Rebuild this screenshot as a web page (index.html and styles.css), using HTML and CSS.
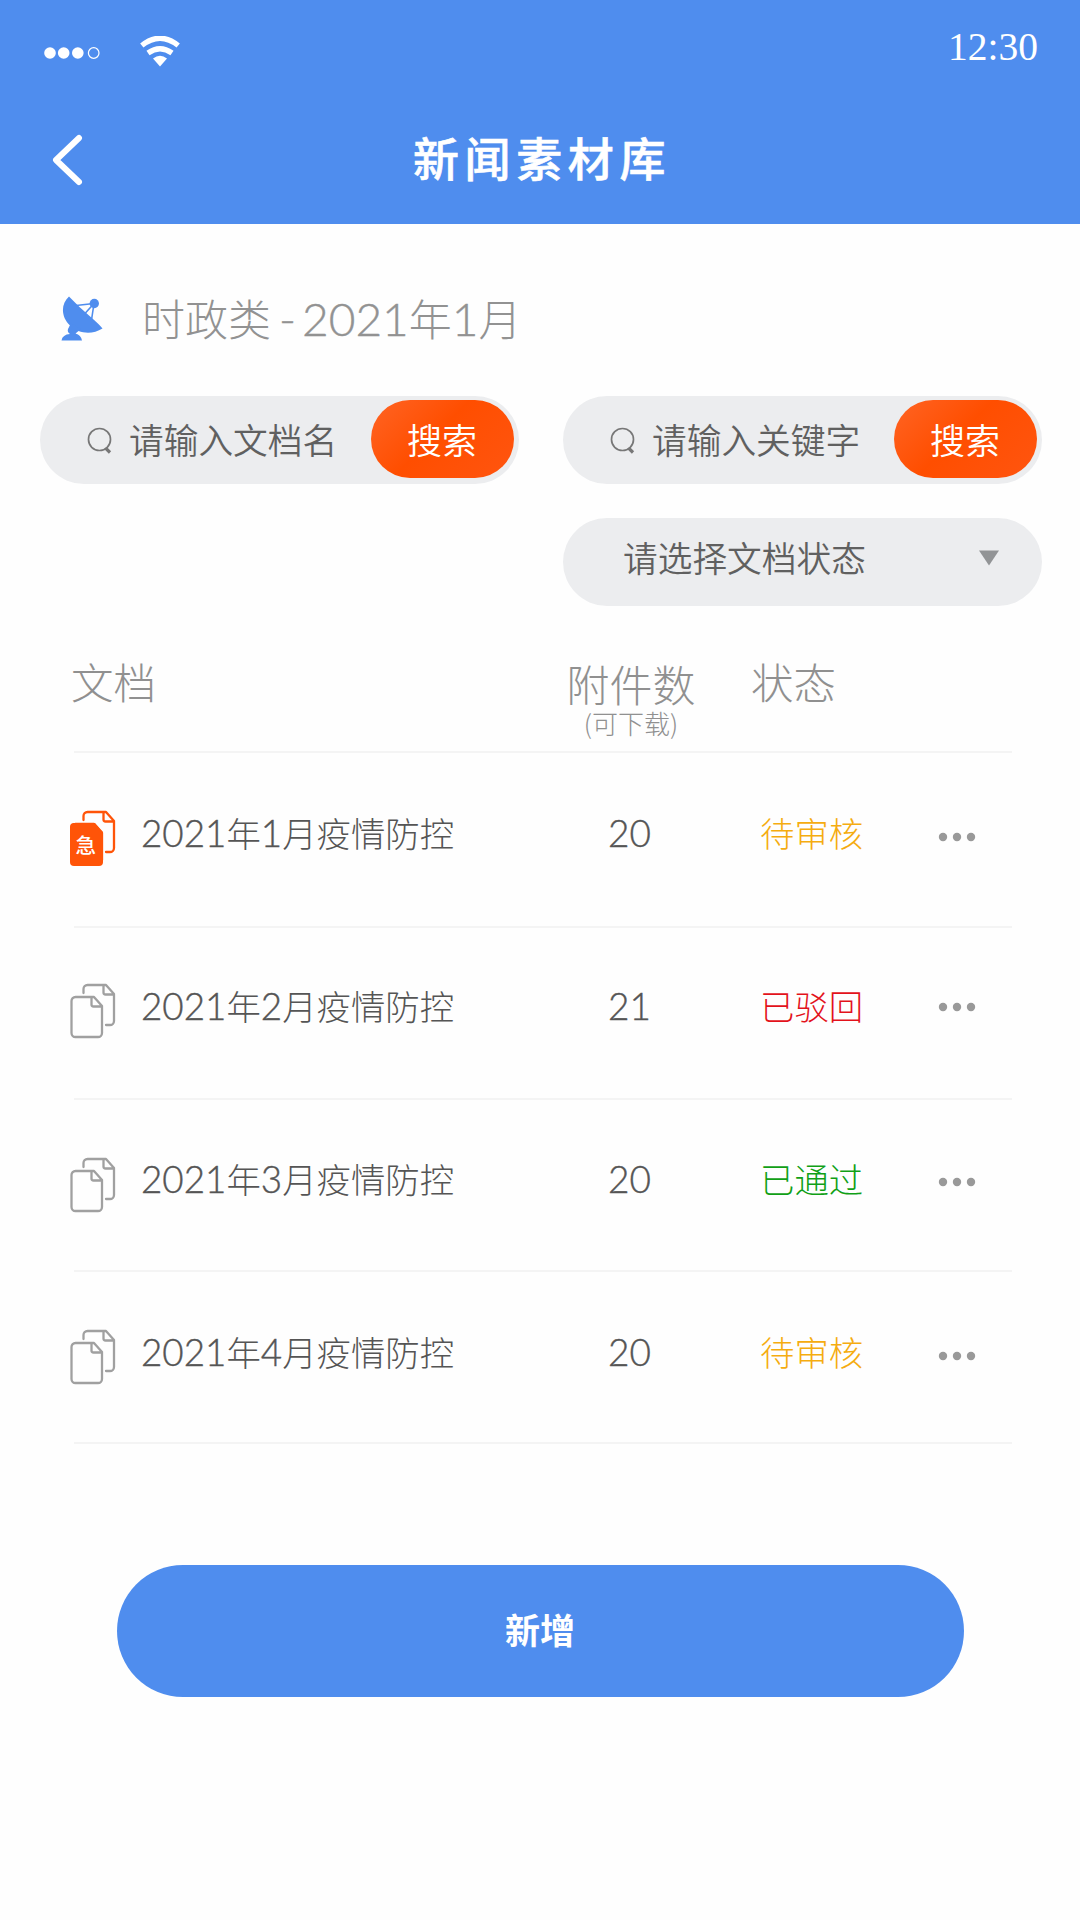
FILE: index.html
```html
<!DOCTYPE html>
<html lang="zh-CN">
<head>
<meta charset="utf-8">
<title>新闻素材库</title>
<link rel="stylesheet" href="styles.css">
</head>
<body>
<svg class="defs" width="0" height="0" aria-hidden="true">
  <symbol id="docs" viewBox="0 0 46 56">
    <path d="M13.500 10V6a4 4 0 0 1 4-4H36L44 11V38a4 4 0 0 1-4 4H36M33.500 2.500V9.500a2 2 0 0 0 2 2H44"/>
    <path d="M5.500 14H24L32 23V50a4 4 0 0 1-4 4H5.500a4 4 0 0 1-4-4V18a4 4 0 0 1 4-4ZM21.500 14.500V21.500a2 2 0 0 0 2 2H31.500"/>
  </symbol>
  <symbol id="search" viewBox="0 0 26 28">
    <circle cx="12.500" cy="12.500" r="11" fill="none" stroke-width="1.700"/>
    <path d="M18.500 21L23 25.500" stroke-width="3.200"/>
  </symbol>
</svg>
<header class="header">
  <div class="status-bar">
    <svg class="signal" viewBox="0 0 56 14"><circle cx="6" cy="7" r="5.800"/><circle cx="19.700" cy="7" r="5.800"/><circle cx="33.800" cy="7" r="5.800"/><circle class="ring" cx="49.700" cy="7" r="5.300"/></svg>
    <svg class="wifi" viewBox="0 0 40 31"><path class="arc" d="M1.800 9.500Q20-5 38.200 9.500M8 17Q20 8.500 32 17"/><path d="M13 22.500Q20 17 27 22.500L20 30.500Z"/></svg>
    <time class="clock">12:30</time>
  </div>
  <div class="nav">
    <svg class="back" viewBox="0 0 32 52"><path d="M28 4L5 26L28 48"/></svg>
    <h1 class="title">新闻素材库</h1>
  </div>
</header>
<main class="main">
  <div class="category">
    <svg class="dish" viewBox="0 0 42 45"><path d="M8 .5C-.5 8 0 21 9 29.500C18 38 31 39 41.500 32.500Q39 29 28 19.500Q18 11 8 .5Z"/><path d="M10 27L7 33Q6 36 9 38Q1.500 38.500 .500 44.500H21Q20 39 14.500 37.500L20 33Z"/><circle cx="33.300" cy="7.500" r="4.700"/><path class="strut" d="M15 9.500L33 7.500L23.500 18M33 7.500L30.500 24"/></svg>
    <h2 class="category-name">时政类<span class="num dash">-</span><span class="num">2021</span>年<span class="num">1</span>月</h2>
  </div>
  <div class="filters">
    <div class="field">
      <svg class="search-icon"><use href="#search"/></svg>
      <span class="placeholder">请输入文档名</span>
      <button class="search-btn">搜索</button>
    </div>
    <div class="field">
      <svg class="search-icon"><use href="#search"/></svg>
      <span class="placeholder">请输入关键字</span>
      <button class="search-btn">搜索</button>
    </div>
    <div class="field select">
      <span class="placeholder">请选择文档状态</span>
      <svg class="caret" viewBox="0 0 22 16"><path d="M1 .500H21L11 15.500Z"/></svg>
    </div>
  </div>
  <section class="table">
    <div class="row head">
      <div class="doc-head">文档</div>
      <div class="count-head">附件数<small class="hint">(可下载)</small></div>
      <div class="state-head">状态</div>
    </div>
    <div class="row first">
      <div class="icon urgent"><svg class="docs"><use href="#docs"/></svg><svg class="urgent-page" viewBox="0 0 34 44"><path d="M4 0H25L33 9V39a4 4 0 0 1-4 4H4a4 4 0 0 1-4-4V4a4 4 0 0 1 4-4Z"/></svg><span class="urgent-mark">急</span></div>
      <div class="name"><span class="num">2021</span>年<span class="num">1</span>月疫情防控</div>
      <div class="count num">20</div>
      <div class="state pending">待审核</div>
      <svg class="more" viewBox="0 0 38 10"><circle cx="5" cy="5" r="4.200"/><circle cx="19" cy="5" r="4.200"/><circle cx="33" cy="5" r="4.200"/></svg>
    </div>
    <div class="row second">
      <div class="icon"><svg class="docs"><use href="#docs"/></svg></div>
      <div class="name"><span class="num">2021</span>年<span class="num">2</span>月疫情防控</div>
      <div class="count num">21</div>
      <div class="state rejected">已驳回</div>
      <svg class="more" viewBox="0 0 38 10"><circle cx="5" cy="5" r="4.200"/><circle cx="19" cy="5" r="4.200"/><circle cx="33" cy="5" r="4.200"/></svg>
    </div>
    <div class="row third">
      <div class="icon"><svg class="docs"><use href="#docs"/></svg></div>
      <div class="name"><span class="num">2021</span>年<span class="num">3</span>月疫情防控</div>
      <div class="count num">20</div>
      <div class="state passed">已通过</div>
      <svg class="more" viewBox="0 0 38 10"><circle cx="5" cy="5" r="4.200"/><circle cx="19" cy="5" r="4.200"/><circle cx="33" cy="5" r="4.200"/></svg>
    </div>
    <div class="row">
      <div class="icon"><svg class="docs"><use href="#docs"/></svg></div>
      <div class="name"><span class="num">2021</span>年<span class="num">4</span>月疫情防控</div>
      <div class="count num">20</div>
      <div class="state pending">待审核</div>
      <svg class="more" viewBox="0 0 38 10"><circle cx="5" cy="5" r="4.200"/><circle cx="19" cy="5" r="4.200"/><circle cx="33" cy="5" r="4.200"/></svg>
    </div>
  </section>
  <button class="add-btn">新增</button>
</main>
</body>
</html>
```
FILE: styles.css
```css
* { box-sizing: border-box; }

body {
  margin: 0;
  width: 1080px;
  min-height: 1920px;
  background: #fefefe;
  color: #606060;
  font-family: "Noto Sans CJK SC", sans-serif;
  font-weight: 350;
}

svg { display: block; flex: none; }
button { border: 0; padding: 0; font: inherit; color: #fff; }
.defs { position: absolute; }
.num { font-family: Lato, sans-serif; font-size: 1.07em; font-weight: 300; -webkit-text-stroke: .4px currentColor; }

.header { height: 224px; background: #4f8dee; color: #fff; }
.status-bar { height: 100px; display: flex; padding: 0 42px 0 44px; }
.signal { width: 56px; height: 14px; margin-top: 46px; fill: #fff; }
.signal .ring { fill: none; stroke: #fff; stroke-width: 1.200; }
.wifi { width: 40px; height: 31px; margin: 36px 0 0 40px; fill: #fff; }
.wifi .arc { fill: none; stroke: #fff; stroke-width: 5.300; }
.clock { margin: 24px 0 0 auto; font: 39.500px/46px "Liberation Serif", serif; }
.nav { height: 120px; display: grid; grid-template-columns: 130px 1fr 130px; align-items: center; }
.back { width: 32px; height: 52px; margin-left: 51px; fill: none; stroke: #fff; stroke-width: 6; stroke-linecap: round; stroke-linejoin: round; }
.title { margin: 0; padding-bottom: 8px; text-align: center; font-size: 46px; line-height: 60px; font-weight: 500; letter-spacing: 5.600px; text-indent: 4px; -webkit-text-stroke: .6px #fff; }

.category { display: flex; height: 172px; padding: 72px 0 0 61px; }
.dish { width: 42px; height: 45px; fill: #4f8dee; }
.strut { fill: none; stroke: #4f8dee; stroke-width: 1.600; }
.category-name { margin: -9px 0 0 39px; font-size: 43px; line-height: 60px; font-weight: 300; color: #929292; white-space: nowrap; }
.dash { margin: 0 6px 0 8px; }

.filters { display: grid; grid-template-columns: 479px 479px; gap: 34px 44px; padding-left: 40px; }
.field { height: 88px; border-radius: 44px; background: #ecedef; display: flex; align-items: center; padding: 0 5px 0 47px; }
.search-icon { width: 26px; height: 28px; stroke: #777; margin: 2px 16px 0 0; }
.placeholder { margin-top: -2px; font-size: 34.700px; line-height: 50px; white-space: nowrap; }
.search-btn { width: 143px; height: 78px; margin: 0 0 2px auto; padding: 0 1px 2px 0; border-radius: 39px; background: linear-gradient(135deg, #ff6424, #ff4e00 45%, #ff5510); font-size: 35px; }
.select { grid-column: 2; padding: 0 42px 8px 60px; justify-content: space-between; }
.caret { width: 22px; height: 16px; fill: #929496; }

.table { margin: 35px 68px 0 70px; font-weight: 300; color: #555; }
.row { height: 172px; display: grid; grid-template-columns: 71px 467px 143px 186px 1fr; align-items: start; font-size: 34.400px; line-height: 50px; position: relative; }
.row::after { content: ""; position: absolute; left: 4px; right: 0; bottom: 0; height: 2px; background: #f4f4f4; }
.head { height: 112px; grid-template-columns: 493px 187px 1fr; font-size: 42.500px; line-height: 50px; color: #909090; padding: 15px 0 0 1px; }
.count-head { padding-top: 2px; width: 134px; text-align: center; white-space: nowrap; font-size: 43px; }
.hint { display: block; font-size: 26px; line-height: 30px; }
.first { height: 175px; }
.icon { margin-top: 57px; position: relative; width: 46px; height: 56px; }
.second .icon { margin-top: 55px; }
.docs { width: 46px; height: 56px; fill: none; stroke: #a0a0a0; stroke-width: 2.300; stroke-linejoin: round; stroke-linecap: round; }
.urgent .docs { stroke: #ff5408; }
.urgent-page { position: absolute; left: 0; top: 12.500px; width: 34px; height: 44px; fill: #ff5408; }
.urgent-mark { position: absolute; left: 5.500px; top: 21px; color: #fff; font-size: 20.500px; line-height: 26px; font-weight: 500; }
.name, .count, .state { margin-top: 54px; white-space: nowrap; height: 50px; }
.count.num { font-size: 37px; padding-top: 1px; }
.second .name, .second .count, .second .state { margin-top: 52px; }
.third .name, .third .count, .third .state { margin-top: 53px; }
.state { padding-left: 9px; }
.pending { color: #f5ac10; }
.rejected { color: #e3121b; }
.passed { color: #10a016; }
.more { width: 38px; height: 10px; margin: 79px 0 0 1px; fill: #999; }
.second .more { margin-top: 74px; }
.third .more { margin-top: 77px; }

.add-btn { display: block; width: 847px; height: 132px; margin: 121px 0 0 116.500px; padding-bottom: 5px; border-radius: 66px; background: #4f8dee; font-size: 35px; font-weight: 700; }
```
